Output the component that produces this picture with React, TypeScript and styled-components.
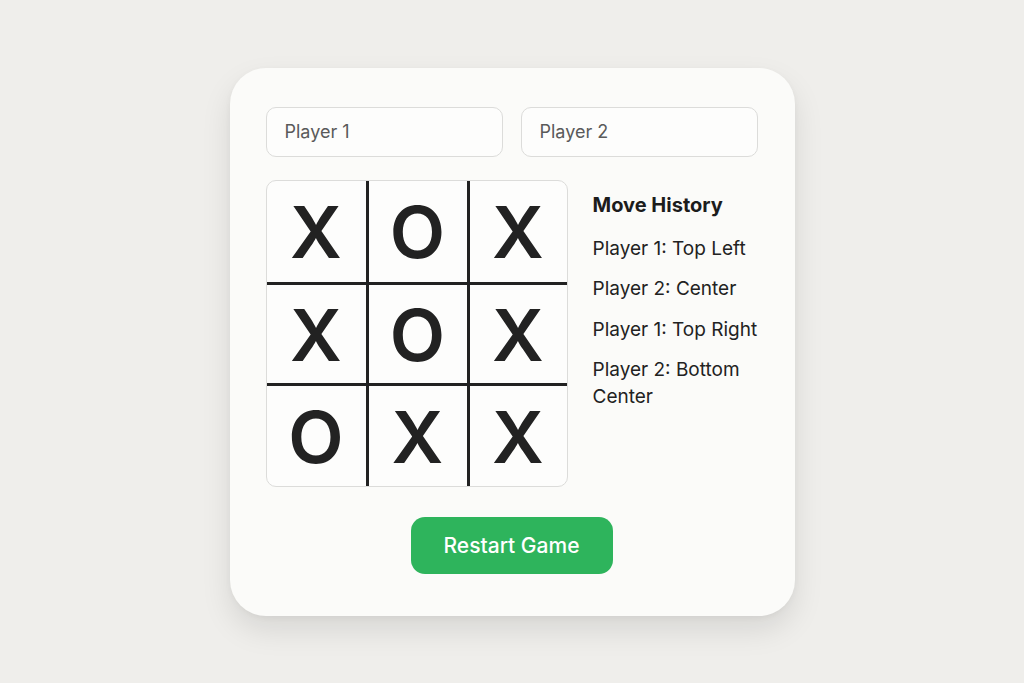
import React, { useState } from 'react';
import styled, { createGlobalStyle } from 'styled-components';

type Mark = 'X' | 'O' | '';

const initialBoard: Mark[] = ['X', 'O', 'X', 'X', 'O', 'X', 'O', 'X', 'X'];

const initialHistory = [
  'Player 1: Top Left',
  'Player 2: Center',
  'Player 1: Top Right',
  'Player 2: Bottom Center'
];

const App = () => {
  const [board, setBoard] = useState<Mark[]>(initialBoard);
  const [history, setHistory] = useState<string[]>(initialHistory);

  const onRestart = () => {
    setBoard(Array(9).fill(''));
    setHistory([]);
  };

  return (
    <Page>
      <GlobalStyle />
      <Card>
        <Players>
          <NameInput type="text" placeholder="Player 1" />
          <NameInput type="text" placeholder="Player 2" />
        </Players>
        <Main>
          <Board>
            {board.map((mark, idx) => (
              <Cell key={idx} col={idx % 3} row={Math.floor(idx / 3)}>
                {mark}
              </Cell>
            ))}
          </Board>
          <History>
            <HistoryTitle>Move History</HistoryTitle>
            {history.map((move, idx) => (
              <HistoryItem key={idx}>{move}</HistoryItem>
            ))}
          </History>
        </Main>
        <RestartButton onClick={onRestart}>Restart Game</RestartButton>
      </Card>
    </Page>
  );
};

export default App;

const GlobalStyle = createGlobalStyle`
  html, body {
    margin: 0;
    padding: 0;
    background: #efeeeb;
    font-family: Inter, "Noto Sans", "Liberation Sans", sans-serif;
  }
  * {
    box-sizing: border-box;
  }
`;

const Page = styled.div`
  width: 100vw;
  height: 100vh;
  display: flex;
  align-items: center;
  justify-content: center;
`;

const Card = styled.div`
  width: 565px;
  padding: 39px 37px 42px 36px;
  background: #fbfbf9;
  border-radius: 36px;
  box-shadow: 0 14px 30px rgba(0, 0, 0, 0.1), 0 2px 6px rgba(0, 0, 0, 0.04);
  display: flex;
  flex-direction: column;
  align-items: center;
`;

const Players = styled.div`
  width: 100%;
  display: grid;
  grid-template-columns: 1fr 1fr;
  gap: 18px;
`;

const NameInput = styled.input`
  height: 50px;
  width: 100%;
  padding: 0 18px;
  border: 1.5px solid #dcdcda;
  border-radius: 10px;
  background: #fdfdfc;
  font-family: Inter, "Noto Sans", sans-serif;
  font-size: 18px;
  color: #333;
  outline: none;
  &::placeholder {
    color: #5a5a5a;
  }
`;

const Main = styled.div`
  width: 100%;
  display: flex;
  gap: 25px;
  margin-top: 23px;
`;

const Board = styled.div`
  width: 302px;
  height: 307px;
  flex-shrink: 0;
  display: grid;
  grid-template-columns: 102px 101px 1fr;
  grid-template-rows: 104px 101px 1fr;
  border: 1.5px solid #dcdcda;
  border-radius: 10px;
  background: #fdfdfc;
  overflow: hidden;
`;

const Cell = styled.div<{ col: number; row: number }>`
  display: flex;
  align-items: center;
  justify-content: center;
  border-right: ${(p) => (p.col < 2 ? '3px solid #222' : 'none')};
  border-bottom: ${(p) => (p.row < 2 ? '3px solid #222' : 'none')};
  font-family: Inter, "Noto Sans", sans-serif;
  font-size: 72px;
  font-weight: 600;
  color: #222;
  line-height: 1;
  padding-top: 2px;
`;

const History = styled.div`
  flex: 1;
  display: flex;
  flex-direction: column;
  padding-top: 12px;
`;

const HistoryTitle = styled.div`
  font-size: 20px;
  font-weight: 700;
  color: #1c1c1c;
  line-height: 26px;
  margin-bottom: 17px;
`;

const HistoryItem = styled.div`
  font-size: 19px;
  color: #222;
  line-height: 27px;
  margin-bottom: 13.5px;
`;

const RestartButton = styled.button`
  margin-top: 30px;
  width: 202px;
  height: 57px;
  border: none;
  border-radius: 14px;
  background: #2eb45c;
  color: #fff;
  font-family: Inter, "Noto Sans", sans-serif;
  font-size: 21px;
  font-weight: 500;
  cursor: pointer;
`;
